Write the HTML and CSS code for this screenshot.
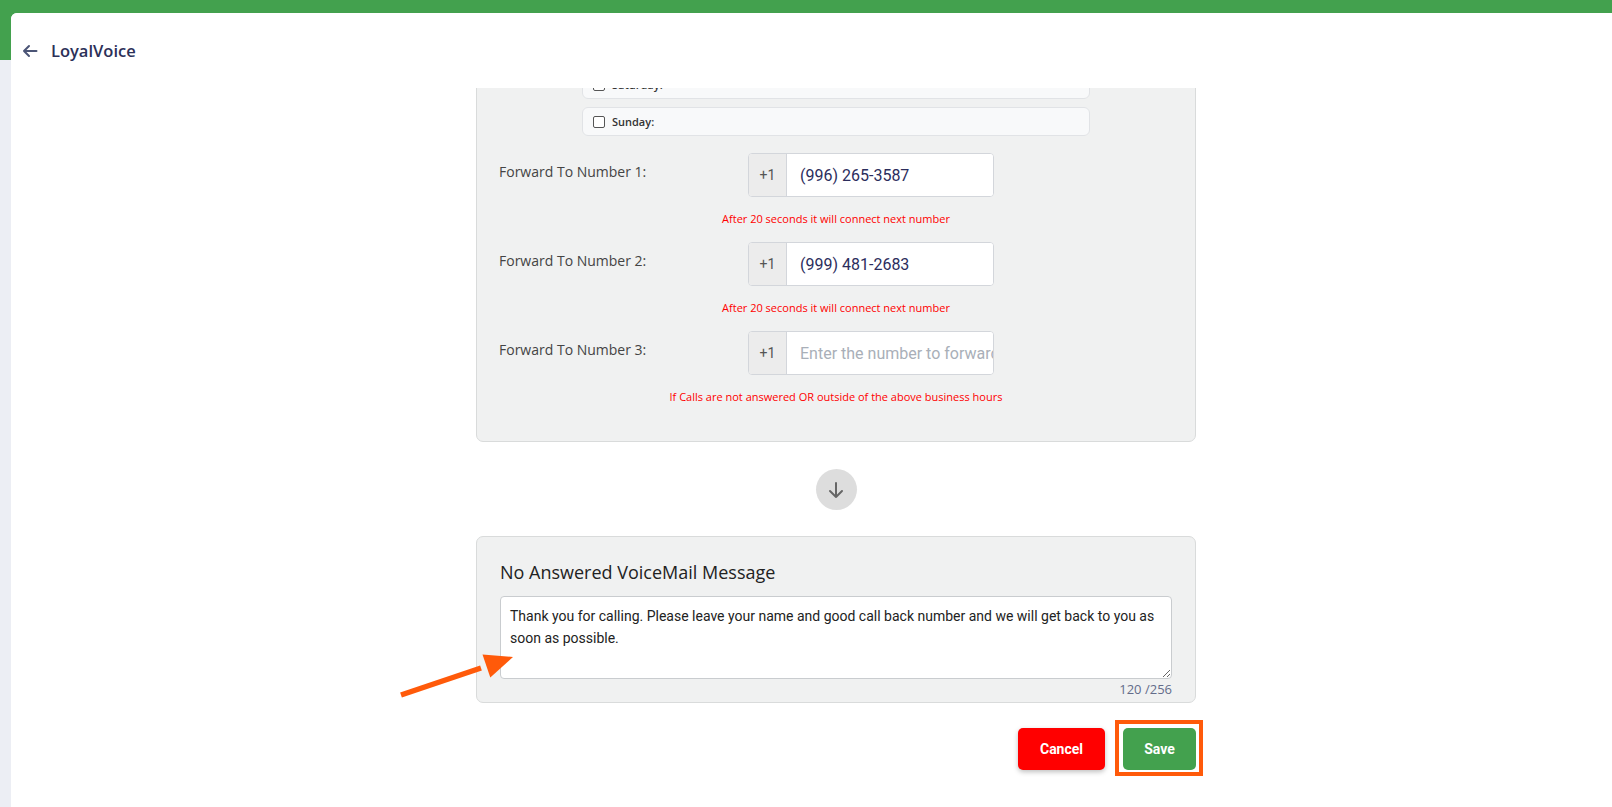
FILE: index.html
```html
<!DOCTYPE html>
<html lang="en">
<head>
<meta charset="utf-8">
<title>LoyalVoice</title>
<link rel="stylesheet" href="styles.css">
</head>
<body>
<div class="app">
  <div class="panel">
    <header class="topbar">
      <svg class="back" width="16" height="16" viewBox="0 0 16 16"><path d="M14.5 8H2M7 3L2 8l5 5" fill="none" stroke="#4b5576" stroke-width="2" stroke-linecap="round" stroke-linejoin="round"/></svg>
      <span class="brand">LoyalVoice</span>
    </header>
    <main class="scroll">
      <div class="column">
        <section class="card card-hours">
          <div class="days">
            <div class="day"><span class="cb"></span>Saturday:</div>
            <div class="day"><span class="cb"></span>Sunday:</div>
          </div>

          <div class="fwd">
            <label class="fwd-label">Forward To Number 1:</label>
            <div class="group"><span class="prefix">+1</span><input class="phone" type="text" value="(996) 265-3587"></div>
          </div>
          <p class="hint">After 20 seconds it will connect next number</p>

          <div class="fwd">
            <label class="fwd-label">Forward To Number 2:</label>
            <div class="group"><span class="prefix">+1</span><input class="phone" type="text" value="(999) 481-2683"></div>
          </div>
          <p class="hint">After 20 seconds it will connect next number</p>

          <div class="fwd">
            <label class="fwd-label">Forward To Number 3:</label>
            <div class="group"><span class="prefix">+1</span><input class="phone" type="text" placeholder="Enter the number to forward calls"></div>
          </div>
          <p class="hint">If Calls are not answered OR outside of the above business hours</p>
        </section>

        <div class="step">
          <svg width="20" height="20" viewBox="0 0 20 20"><path d="M10 3v14M4 11l6 6 6-6" fill="none" stroke="#666" stroke-width="2" stroke-linecap="round" stroke-linejoin="round"/></svg>
        </div>

        <section class="card card-vm">
          <h2 class="vm-title">No Answered VoiceMail Message</h2>
          <textarea class="vm-text">Thank you for calling. Please leave your name and good call back number and we will get back to you as soon as possible.</textarea>
          <div class="counter">120 /256</div>
        </section>

        <div class="actions">
          <button class="btn btn-cancel">Cancel</button>
          <span class="highlight"><button class="btn btn-save">Save</button></span>
        </div>
      </div>
    </main>
  </div>
  <svg class="annot-arrow" width="130" height="60" viewBox="0 0 130 60">
    <path d="M11 50L91 23" stroke="#ff5a0a" stroke-width="5.5" fill="none"/>
    <path d="M123 12L100.3 32.4L92.5 9.6Z" fill="#ff5a0a"/>
  </svg>
</div>
</body>
</html>
```

FILE: styles.css
```css
* { box-sizing: border-box; }
html, body { margin: 0; padding: 0; }
body {
  font-family: "Open Sans", "Noto Sans", sans-serif;
  background: #eceef4;
  overflow: hidden;
}
.app {
  position: relative;
  display: flex;
  height: 807px;
  background: linear-gradient(#43a14e 0, #43a14e 60px, #eceef4 60px);
}
.panel {
  flex: 1;
  margin: 13px 0 0 11px;
  background: #ffffff;
  border-top-left-radius: 6px;
  display: flex;
  flex-direction: column;
  overflow: hidden;
}
.topbar {
  height: 75px;
  flex: none;
  display: flex;
  align-items: center;
  padding-left: 11px;
  background: #ffffff;
  position: relative;
  z-index: 2;
}
.back { display: block; margin-right: 13px; }
.brand {
  font-size: 16.5px;
  font-weight: 600;
  color: #2c3058;
}
.scroll {
  flex: 1;
  overflow: hidden;
  padding-left: 49px;
}
.column {
  width: 720px;
  margin: -32px auto 0;
}
.card {
  background: #f0f1f1;
  border: 1px solid #d9dbdb;
  border-radius: 7px;
}
.card-hours {
  padding: 13px 22px 37px;
}
.days {
  margin-left: 83px;
  width: 508px;
  display: flex;
  flex-direction: column;
  gap: 8px;
}
.day {
  height: 29px;
  background: #f8f9fa;
  border: 1px solid #e1e3e6;
  border-radius: 6px;
  display: flex;
  align-items: center;
  padding-left: 10px;
  font-size: 11px;
  font-weight: 600;
  color: #333;
}
.cb {
  width: 12px;
  height: 12px;
  border: 1px solid #555;
  border-radius: 2px;
  background: #fff;
  margin-right: 7px;
}
.fwd {
  display: flex;
  margin-top: 17px;
}
.hint + .fwd { margin-top: 16px; }
.fwd-label {
  width: 249px;
  flex: none;
  font-size: 14px;
  line-height: 20px;
  margin-top: 9px;
  color: #444;
}
.group {
  width: 246px;
  height: 44px;
  display: flex;
  border: 1px solid #d3d6db;
  border-radius: 4px;
  overflow: hidden;
  background: #fff;
}
.prefix {
  width: 38px;
  flex: none;
  background: #ececec;
  border-right: 1px solid #d3d6db;
  display: flex;
  align-items: center;
  justify-content: center;
  font-family: Roboto, sans-serif;
  font-size: 14px;
  color: #555;
}
.phone {
  flex: 1;
  min-width: 0;
  border: 0;
  outline: 0;
  padding: 0 0 0 13px;
  font-family: Roboto, sans-serif;
  font-size: 16px;
  color: #2b2d5c;
  background: #fff;
}
.phone::placeholder { color: #a9afb8; }
.hint {
  margin: 15px 0 0;
  text-align: center;
  font-size: 11px;
  line-height: 14px;
  color: #ff0000;
}
.step {
  width: 41px;
  height: 41px;
  border-radius: 50%;
  background: #dddddd;
  margin: 27px auto 26px;
  display: flex;
  align-items: center;
  justify-content: center;
}
.step svg { display: block; }
.card-vm {
  padding: 23px 23px 6px;
}
.vm-title {
  margin: 0;
  font-size: 18px;
  line-height: 24px;
  font-weight: 500;
  color: #222;
}
.vm-text {
  display: block;
  width: 100%;
  height: 83px;
  margin-top: 12px;
  padding: 8px 9px;
  border: 1px solid #c9cccf;
  border-radius: 4px;
  font-family: Roboto, sans-serif;
  font-size: 14px;
  line-height: 22px;
  color: #222;
  background: #fff;
  resize: vertical;
  outline: 0;
}
.counter {
  margin-top: 3px;
  text-align: right;
  font-size: 13px;
  line-height: 14px;
  color: #646c8a;
}
.actions {
  margin-top: 25px;
  display: flex;
  justify-content: flex-end;
  gap: 18px;
}
.btn {
  height: 42px;
  border: 0;
  border-radius: 5px;
  font-family: Roboto, sans-serif;
  font-weight: 700;
  font-size: 14px;
  color: #fff;
  cursor: pointer;
}
.btn-cancel {
  width: 87px;
  background: #ff0000;
  box-shadow: 0 2px 5px rgba(0,0,0,0.25);
}
.btn-save {
  width: 73px;
  background: #43a14e;
  display: block;
}
.highlight {
  position: relative;
  display: block;
}
.highlight::after {
  content: "";
  position: absolute;
  top: -8px;
  left: -8px;
  right: -7px;
  bottom: -6px;
  border: 4px solid #ff5a0a;
  pointer-events: none;
}
.annot-arrow {
  position: absolute;
  left: 390px;
  top: 645px;
  z-index: 5;
}
```
